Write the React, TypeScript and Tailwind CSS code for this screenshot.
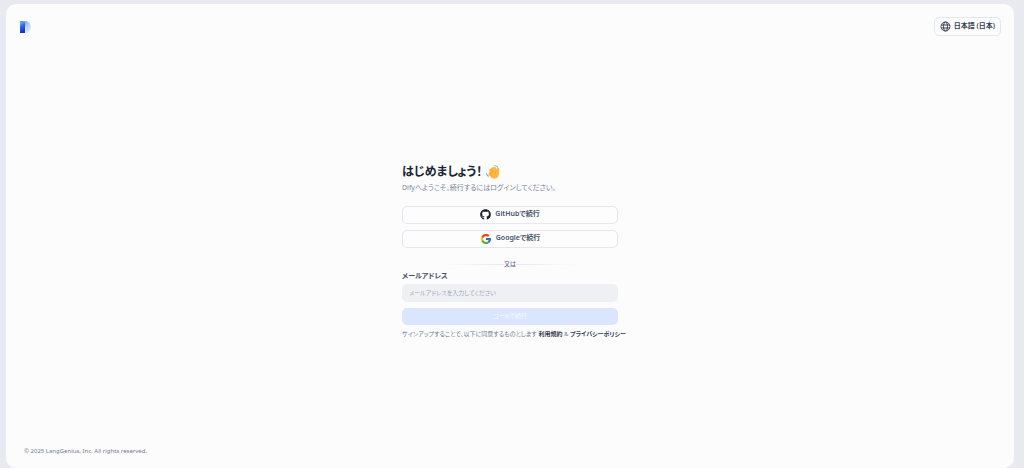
import React from 'react';
import { FaGithub } from 'react-icons/fa';
import { FcGoogle } from 'react-icons/fc';

const Logo: React.FC = () => (
  <svg className="w-[11px] h-3" viewBox="0 0 22 24" role="img" aria-label="Dify">
    <defs>
      <linearGradient id="logo-stem" x1="0" y1="0" x2="0.3" y2="1">
        <stop offset="0" stopColor="#8fb2f5" />
        <stop offset="0.45" stopColor="#3566de" />
        <stop offset="1" stopColor="#0b35c6" />
      </linearGradient>
      <linearGradient id="logo-bowl" x1="0" y1="0" x2="1" y2="0.9">
        <stop offset="0" stopColor="#5388f0" />
        <stop offset="0.5" stopColor="#a9c9fa" />
        <stop offset="1" stopColor="#ecf4ff" />
      </linearGradient>
    </defs>
    <path d="M0 0h11a11 12 0 0 1 0 24V11H0z" fill="url(#logo-bowl)" />
    <path d="M0 2h10v22H0z" fill="url(#logo-stem)" />
  </svg>
);

const GlobeIcon: React.FC = () => (
  <svg
    className="size-[11px]"
    viewBox="0 0 22 22"
    fill="none"
    stroke="currentColor"
    strokeWidth="2"
    aria-hidden="true"
  >
    <circle cx="11" cy="11" r="9" />
    <ellipse cx="11" cy="11" rx="4" ry="9" />
    <path d="M3 8h16M3 14h16" />
  </svg>
);

const WavingHand: React.FC = () => (
  <svg className="w-[14px] h-[14px]" viewBox="0 0 28 28" aria-hidden="true">
    <path
      d="M7 10c-1-1.800 1-3.600 2.600-2.300L13 4.500C14.300 3 16.300 3.400 17 5c1.500-1 3.300-.3 3.700 1.300l1 3.700c0-2.200.8-4.300 2.600-4.300 1.700 0 2.300 1.600 2.200 3.600L26 18c-.3 5.500-3.800 9.300-8.500 9.300-3.500 0-5.800-1.300-8-3.500l-4-4c-1.500-1.700 0-3.800 1.700-3.100-1.600-1.500-.6-3.500 1-3.200C7 12.500 6.600 11.500 7 10z"
      fill="#fdb83b"
    />
    <path
      d="m9.500 8.500 5 5.500M8 13l5 5M7.500 17l4 4M22 10c-2.500 1.600-3.300 4-2.800 6.700"
      fill="none"
      stroke="#ec962c"
      strokeWidth="1.200"
      strokeLinecap="round"
    />
    <path
      d="M17.500 1.500c2.700-.2 4.600.8 5.500 2.500M1.200 17c.2 3 1.500 4.500 3.500 5.200"
      fill="none"
      stroke="#74b5e6"
      strokeWidth="2.400"
      strokeLinecap="round"
    />
  </svg>
);

interface SocialButtonProps {
  icon: React.ReactNode;
  label: string;
}

const SocialButton: React.FC<SocialButtonProps> = ({ icon, label }) => (
  <button
    type="button"
    className="flex h-[18px] w-full items-center justify-center gap-1 rounded-[5px] border border-[#e4e7f0] bg-[#fdfdfe] text-[7px] font-semibold text-[#475269]"
  >
    {icon}
    {label}
  </button>
);

const Header: React.FC = () => (
  <header className="flex items-center justify-between pb-3 pl-[14px] pr-[13px] pt-[13px]">
    <Logo />
    <button
      type="button"
      className="flex h-[19px] items-center gap-[3px] rounded-[5px] border border-[#e4e6ee] bg-[#fdfdfe] px-[5px] text-[7px] font-semibold text-[#354052]"
    >
      <GlobeIcon />
      日本語 (日本)
    </button>
  </header>
);

const SignInForm: React.FC = () => (
  <div className="w-[216px]">
    <h1 className="flex h-4 items-center gap-1 text-[12px] font-bold text-[#1b2435]">
      はじめましょう！
      <WavingHand />
    </h1>
    <p className="mt-[2px] text-[7px] leading-3 text-[#7d8799]">Difyへようこそ。続行するにはログインしてください。</p>

    <div className="mt-3 flex flex-col gap-[6px]">
      <SocialButton icon={<FaGithub className="size-[11px] text-[#1b1f23]" />} label="GitHubで続行" />
      <SocialButton icon={<FcGoogle className="size-3" />} label="Googleで続行" />
    </div>

    <div className="mt-[11px] flex h-3 items-center justify-center text-[6px] font-medium text-[#5d687c]">
      <span className="h-px w-[61px] bg-linear-to-r from-transparent to-[#e4e8f1]" />
      <span>又は</span>
      <span className="h-px w-[61px] bg-linear-to-l from-transparent to-[#e4e8f1]" />
    </div>

    <form onSubmit={(e) => e.preventDefault()}>
      <label htmlFor="email" className="block text-[7px] font-semibold leading-[10px] text-[#465066]">
        メールアドレス
      </label>
      <input
        id="email"
        type="email"
        placeholder="メールアドレスを入力してください"
        className="mt-[3px] block h-[18px] w-full rounded-[5px] bg-[#eff0f4] px-[7px] text-[6px] text-[#354052] outline-none placeholder:text-[#a0a8b6]"
      />
      <button
        type="submit"
        disabled
        className="mt-[6px] flex h-[17px] w-full items-center justify-center rounded-[5px] bg-[#dae5fe] text-[6px] font-medium text-[#f4f7ff]"
      >
        コードで続行
      </button>
    </form>

    <p className="mt-1 whitespace-nowrap text-[6px] leading-[10px] text-[#717b8e]">
      サインアップすることで、以下に同意するものとします{' '}
      <a href="#terms" className="font-semibold text-[#354052]">利用規約</a>
      {' & '}
      <a href="#privacy" className="font-semibold text-[#354052]">プライバシーポリシー</a>
    </p>
  </div>
);

export default function App() {
  return (
    <div className="flex min-h-screen bg-[#e9eaf0] pl-[6px] pr-[10px] pt-1 font-['Noto_Sans','Noto_Sans_CJK_JP',sans-serif] [font-feature-settings:'palt']">
      <div className="flex flex-1 flex-col rounded-[10px] bg-[#fcfcfd]">
        <Header />
        <main className="flex flex-1 items-center justify-center pt-2">
          <SignInForm />
        </main>
        <footer className="px-[18px] pb-3 text-[6px] leading-[10px] text-[#717b8e]">
          © 2025 LangGenius, Inc. All rights reserved.
        </footer>
      </div>
    </div>
  );
}
